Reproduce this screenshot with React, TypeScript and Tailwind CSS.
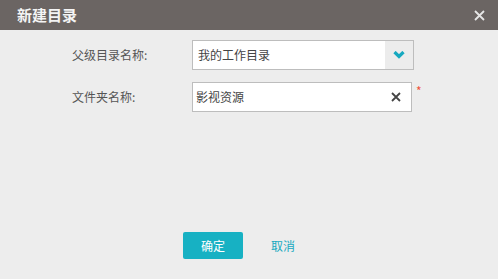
import { useState } from 'react';

const FONT = { fontFamily: '"Noto Sans CJK SC", "Noto Sans", sans-serif' };

export default function App() {
  const [name, setName] = useState('影视资源');

  return (
    <div className="w-[498px] h-[279px] flex flex-col bg-[#ededed]" style={FONT}>
      <div className="h-[30px] flex items-center justify-between bg-[#6b6563] pl-[17px] pr-[13px]">
        <span className="text-[15px] font-bold text-[#f4f4f4]">新建目录</span>
        <svg width="11" height="11" viewBox="0 0 11 11" className="text-[#e6e6e6]">
          <path d="M1 1 L10 10 M10 1 L1 10" stroke="currentColor" strokeWidth="1.8" />
        </svg>
      </div>

      <div className="flex flex-col gap-[12px] pt-[10px] pl-[72px]">
        <div className="flex items-center">
          <label className="w-[120px] text-[12px] text-[#555]">父级目录名称:</label>
          <div className="w-[222px] h-[30px] flex border border-[#bdbdbd] bg-white">
            <span className="flex-1 flex items-center pl-[5px] text-[12px] text-[#444]">我的工作目录</span>
            <span className="w-[28px] flex items-center justify-center bg-[#ececec]">
              <svg width="12" height="8" viewBox="0 0 12 8">
                <path d="M1.5 1 L6 5.5 L10.5 1" fill="none" stroke="#17a9c0" strokeWidth="3.2" />
              </svg>
            </span>
          </div>
        </div>

        <div className="flex items-center">
          <label className="w-[120px] text-[12px] text-[#555]">文件夹名称:</label>
          <div className="w-[220px] h-[30px] flex items-center border border-[#bdbdbd] bg-white">
            <input
              value={name}
              onChange={(e) => setName(e.target.value)}
              className="flex-1 min-w-0 pl-[3px] text-[12px] text-[#444] outline-none bg-transparent"
            />
            <svg width="10" height="10" viewBox="0 0 10 10" className="mr-[10px]">
              <path d="M1 1 L9 9 M9 1 L1 9" stroke="#444" strokeWidth="1.8" />
            </svg>
          </div>
          <span className="self-start ml-[4px] mt-0 text-[12px] text-[#f0533a]">*</span>
        </div>
      </div>

      <div className="mt-auto mb-[20px] flex items-center pl-[183px] gap-[28px]">
        <button className="w-[60px] h-[27px] rounded-[2px] bg-[#17b1c3] text-[12px] text-white">确定</button>
        <button className="text-[12px] text-[#17a9c0]">取消</button>
      </div>
    </div>
  );
}
